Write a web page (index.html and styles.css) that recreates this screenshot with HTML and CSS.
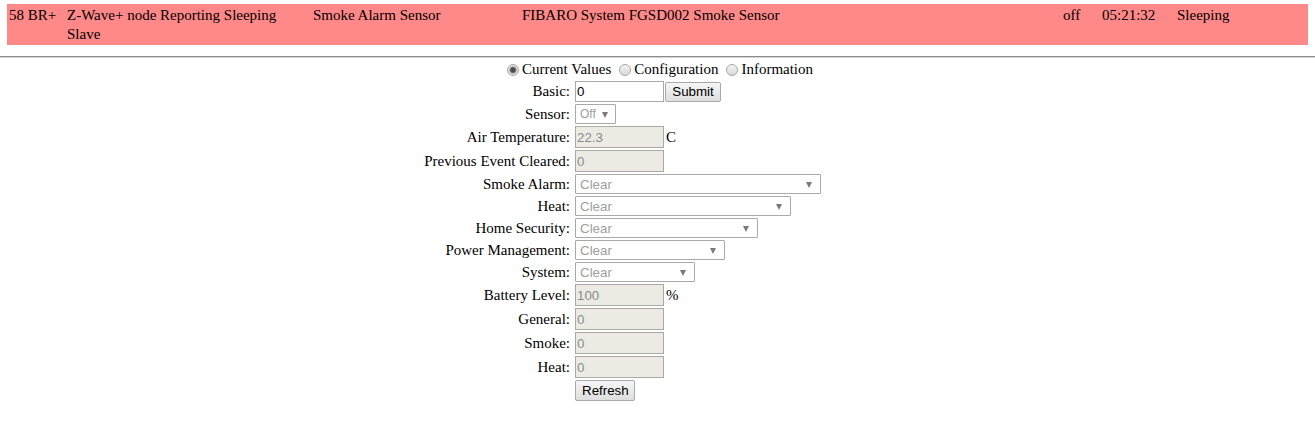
FILE: index.html
```html
<!DOCTYPE html>
<html>
<head>
<meta charset="utf-8">
<link rel="stylesheet" href="styles.css">
</head>
<body>
<div class="node">
  <div class="cell">58 BR+</div>
  <div class="cell">Z-Wave+ node Reporting Sleeping Slave</div>
  <div class="cell">Smoke Alarm Sensor</div>
  <div class="cell">FIBARO System FGSD002 Smoke Sensor</div>
  <div class="cell">off</div>
  <div class="cell">05:21:32</div>
  <div class="cell">Sleeping</div>
</div>
<hr class="rule">
<div class="tabs">
  <label class="opt"><input type="radio" name="v" checked>Current Values</label>
  <label class="opt"><input type="radio" name="v">Configuration</label>
  <label class="opt"><input type="radio" name="v">Information</label>
</div>
<div class="form">
  <div class="lbl">Basic:</div>
  <div class="ctl"><input class="txt live" type="text" value="0"><button class="btn submit">Submit</button></div>

  <div class="lbl">Sensor:</div>
  <div class="ctl"><div class="sel w41"><span>Off</span><i class="arrow"></i></div></div>

  <div class="lbl">Air Temperature:</div>
  <div class="ctl"><input class="txt" type="text" value="22.3" disabled><span class="unit">C</span></div>

  <div class="lbl">Previous Event Cleared:</div>
  <div class="ctl"><input class="txt" type="text" value="0" disabled></div>

  <div class="lbl">Smoke Alarm:</div>
  <div class="ctl"><div class="sel w246"><span>Clear</span><i class="arrow"></i></div></div>

  <div class="lbl">Heat:</div>
  <div class="ctl"><div class="sel w216"><span>Clear</span><i class="arrow"></i></div></div>

  <div class="lbl">Home Security:</div>
  <div class="ctl"><div class="sel w183"><span>Clear</span><i class="arrow"></i></div></div>

  <div class="lbl">Power Management:</div>
  <div class="ctl"><div class="sel w150"><span>Clear</span><i class="arrow"></i></div></div>

  <div class="lbl">System:</div>
  <div class="ctl"><div class="sel w120"><span>Clear</span><i class="arrow"></i></div></div>

  <div class="lbl">Battery Level:</div>
  <div class="ctl"><input class="txt" type="text" value="100" disabled><span class="unit">%</span></div>

  <div class="lbl">General:</div>
  <div class="ctl"><input class="txt" type="text" value="0" disabled></div>

  <div class="lbl">Smoke:</div>
  <div class="ctl"><input class="txt" type="text" value="0" disabled></div>

  <div class="lbl">Heat:</div>
  <div class="ctl"><input class="txt" type="text" value="0" disabled></div>

  <div class="lbl"></div>
  <div class="ctl"><button class="btn refresh">Refresh</button></div>
</div>
</body>
</html>
```
FILE: styles.css
```css
html, body {
  margin: 0;
  padding: 0;
  background: #ffffff;
  color: #000000;
  font-family: "Liberation Serif", "Times New Roman", serif;
  font-size: 15px;
}

.node {
  margin: 4px 7px 0 7px;
  height: 41px;
  box-sizing: border-box;
  padding: 2px 0 0 2px;
  background: #ff8888;
  display: grid;
  grid-template-columns: 58px 246px 209px 541px 39px 75px 1fr;
  line-height: 19px;
}

.cell {
  padding-right: 3px;
}

.rule {
  margin: 11px 0 0 0;
  height: 0;
  border: 0;
  border-top: 1px solid #8c8c8c;
  border-bottom: 1px solid #d4d4d4;
}

.tabs {
  margin-top: 1px;
  height: 21px;
  display: flex;
  justify-content: center;
  align-items: center;
  gap: 3px;
  line-height: 21px;
}

.opt {
  display: inline-flex;
  align-items: center;
}

.opt input {
  appearance: none;
  -webkit-appearance: none;
  width: 12px;
  height: 12px;
  margin: 0 3px 0 5px;
  box-sizing: border-box;
  border: 1px solid #a8a8a8;
  border-radius: 50%;
  background: linear-gradient(#f4f4f4, #d8d8d8);
}

.opt input:checked {
  background: radial-gradient(circle, #4a4a4a 0, #4a4a4a 2px, #8a8a8a 3px, #dcdcdc 4px, #e6e6e6 6px);
}

.form {
  display: grid;
  grid-template-columns: 570px auto;
  column-gap: 5px;
  justify-content: start;
  align-items: center;
}

.lbl {
  text-align: right;
  white-space: nowrap;
}

.ctl {
  display: flex;
  align-items: center;
}

.txt {
  box-sizing: border-box;
  width: 89px;
  height: 22px;
  margin: 1px 0;
  padding: 0 1px;
  border: 1px solid #a9a9a9;
  background: #ebebe4;
  color: #8d8d8d;
  font-family: "Liberation Sans", Arial, sans-serif;
  font-size: 13.333px;
}

.txt.live {
  height: 21px;
  background: #ffffff;
  color: #000000;
}

.unit {
  margin-left: 2px;
}

.btn {
  box-sizing: border-box;
  margin: 0;
  padding: 0 6px;
  border: 1px solid #a9a9a9;
  border-radius: 2px;
  background: linear-gradient(#f6f6f6, #dedede);
  color: #000000;
  font-family: "Liberation Sans", Arial, sans-serif;
  font-size: 13.333px;
}

.submit {
  width: 56px;
  height: 20px;
  margin-left: 1px;
}

.refresh {
  width: 60px;
  height: 21px;
  margin: 1px 0;
}

.sel {
  box-sizing: border-box;
  height: 20px;
  margin: 1px 0;
  padding: 0 8px 0 4px;
  border: 1px solid #a9a9a9;
  border-radius: 1px;
  background: #ffffff;
  color: #a0a0a0;
  font-family: "Liberation Sans", Arial, sans-serif;
  font-size: 13.333px;
  display: flex;
  align-items: center;
  justify-content: space-between;
}

.arrow {
  flex: none;
  width: 0;
  height: 0;
  border-left: 3.5px solid transparent;
  border-right: 3.5px solid transparent;
  border-top: 6px solid #7a7a7a;
  margin-top: 1px;
}

.w41 {
  width: 41px;
  padding-right: 7px;
  font-size: 12px;
}
.w246 { width: 246px; }
.w216 { width: 216px; }
.w183 { width: 183px; }
.w150 { width: 150px; }
.w120 { width: 120px; }
```
